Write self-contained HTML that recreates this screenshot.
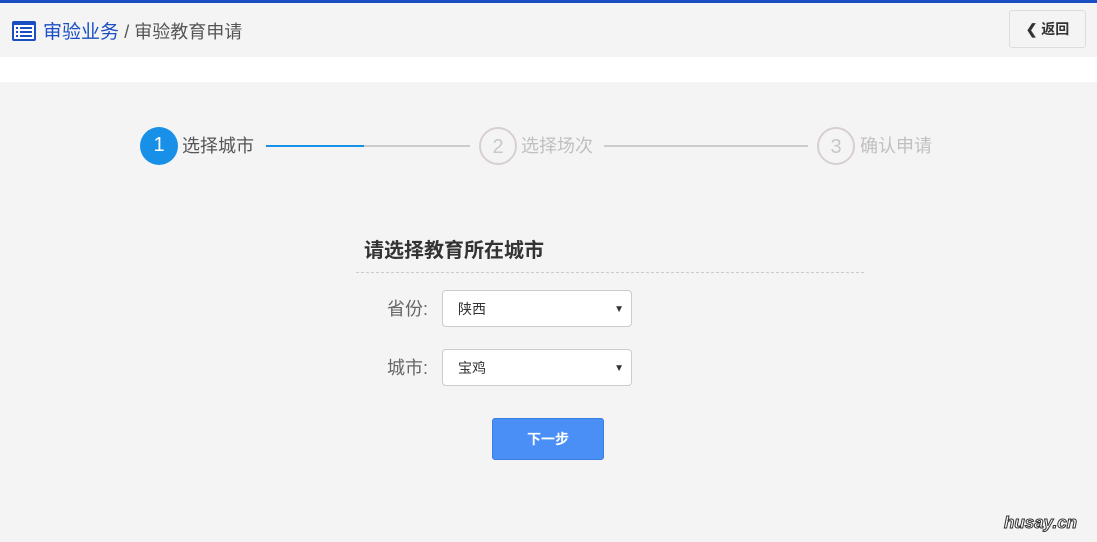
<!DOCTYPE html>
<html><head><meta charset="utf-8"><style>
body{margin:0;width:1097px;height:542px;background:#f4f4f4;font-family:"Liberation Sans","Noto Sans CJK SC",sans-serif;position:relative;overflow:hidden}
.top{position:absolute;left:0;top:0;width:1097px;height:3px;background:#1a4fc4}
.hdr{position:absolute;left:0;top:3px;width:1097px;height:54px;background:#f4f4f4}
.white{position:absolute;left:0;top:57px;width:1097px;height:25px;background:#fff}
.bc{position:absolute;left:43px;top:20px;font-size:19px;color:#1a4fc4;line-height:24px}
.bc span{color:#555;font-size:18px}
.back{position:absolute;left:1009px;top:10px;width:75px;height:36px;border:1px solid #ddd;border-radius:3px;background:#f4f4f4;font-size:14px;font-weight:bold;color:#333;line-height:36px;text-align:center}
.circ{position:absolute;width:38px;height:38px;border-radius:50%;text-align:center;line-height:36px;font-size:20px;box-sizing:border-box}
.lbl{position:absolute;font-size:18px;line-height:24px}
.ln{position:absolute;height:2px;top:145px}
.h{position:absolute;left:364px;top:234px;font-size:20px;font-weight:bold;color:#333}
.dash{position:absolute;left:356px;top:272px;width:508px;border-top:1px dashed #ccc}
.fl{position:absolute;font-size:18px;color:#666}
.sel{position:absolute;left:442px;width:188px;height:35px;border:1px solid #ccc;border-radius:4px;background:#fff;font-size:14px;color:#333;line-height:37px;box-sizing:content-box}
.sel i{position:absolute;left:15px;font-style:normal}
.sel b{position:absolute;right:7px;top:0;font-size:10px;color:#333;font-weight:normal}
.btn{position:absolute;left:492px;top:418px;width:110px;height:40px;background:#4a8ff5;border:1px solid #3a7ee0;border-radius:3px;color:#fff;font-weight:bold;font-size:14px;text-align:center;line-height:40px}
.wm{position:absolute;left:1004px;top:513px;font-size:17px;font-weight:bold;font-style:italic;color:#fff;-webkit-text-stroke:1px #333}
</style></head><body>
<div class="top"></div><div class="hdr"></div><div class="white"></div>
<svg style="position:absolute;left:11px;top:20px" width="26" height="22" viewBox="0 0 26 22"><rect x="1" y="1" width="24" height="20" rx="2" fill="#1a4fc4"/><rect x="3" y="5" width="20" height="14" fill="#fff"/><g fill="#1a4fc4"><rect x="5" y="7" width="2" height="2"/><rect x="9" y="7" width="12" height="2"/><rect x="5" y="11" width="2" height="2"/><rect x="9" y="11" width="12" height="2"/><rect x="5" y="15" width="2" height="2"/><rect x="9" y="15" width="12" height="2"/></g></svg>
<div class="bc">审验业务 <span>/ 审验教育申请</span></div>
<div class="back">❮ 返回</div>
<div class="circ" style="left:140px;top:127px;background:#1890e8;color:#fff">1</div>
<div class="lbl" style="left:182px;top:134px;color:#555">选择城市</div>
<div class="ln" style="left:266px;width:98px;background:#1890e8"></div>
<div class="ln" style="left:364px;width:106px;background:#ccc"></div>
<div class="circ" style="left:479px;top:127px;border:2px solid #d8d0d0;color:#c8c8c8">2</div>
<div class="lbl" style="left:521px;top:134px;color:#c0c0c0">选择场次</div>
<div class="ln" style="left:604px;width:204px;background:#ccc"></div>
<div class="circ" style="left:817px;top:127px;border:2px solid #d8d0d0;color:#c8c8c8">3</div>
<div class="lbl" style="left:860px;top:134px;color:#c0c0c0">确认申请</div>
<div class="h">请选择教育所在城市</div>
<div class="dash"></div>
<div class="fl" style="left:387px;top:295px">省份:</div>
<div class="sel" style="top:290px"><i>陕西</i><b>▼</b></div>
<div class="fl" style="left:387px;top:354px">城市:</div>
<div class="sel" style="top:349px"><i>宝鸡</i><b>▼</b></div>
<div class="btn">下一步</div>
<div class="wm">husay.cn</div>
</body></html>
